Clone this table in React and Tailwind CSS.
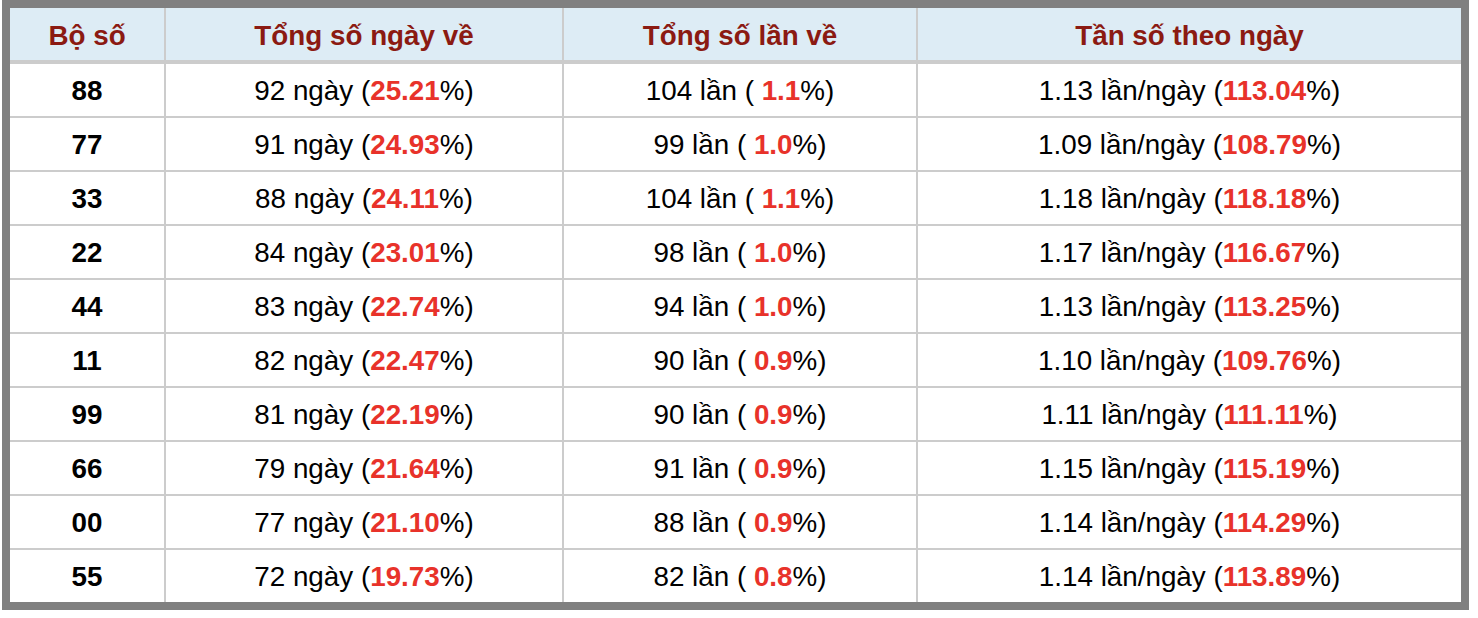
const rows = [
  ["88", "92", "25.21", "104", " 1.1", "1.13", "113.04"],
  ["77", "91", "24.93", "99", " 1.0", "1.09", "108.79"],
  ["33", "88", "24.11", "104", " 1.1", "1.18", "118.18"],
  ["22", "84", "23.01", "98", " 1.0", "1.17", "116.67"],
  ["44", "83", "22.74", "94", " 1.0", "1.13", "113.25"],
  ["11", "82", "22.47", "90", " 0.9", "1.10", "109.76"],
  ["99", "81", "22.19", "90", " 0.9", "1.11", "111.11"],
  ["66", "79", "21.64", "91", " 0.9", "1.15", "115.19"],
  ["00", "77", "21.10", "88", " 0.9", "1.14", "114.29"],
  ["55", "72", "19.73", "82", " 0.8", "1.14", "113.89"],
];

const cols = "grid grid-cols-[154px_396px_352px_543px] gap-x-[2px]";
const cell = "flex items-center justify-center h-[52px] pt-[2px] bg-white whitespace-pre";

function Red({ children }) {
  return <span className="font-bold text-[#e8322a]">{children}</span>;
}

export default function App() {
  return (
    <div
      className="ml-[2px] w-[1467px] border-[8px] border-[#808080] bg-[#cccccc] text-[27.8px] text-black"
      style={{ fontFamily: '"Liberation Sans", Arial, sans-serif' }}
    >
      <div className={cols}>
        {["Bộ số", "Tổng số ngày về", "Tổng số lần về", "Tần số theo ngày"].map((h) => (
          <div key={h} className="flex items-center justify-center h-[52px] pt-[3px] bg-[#ddecf5] font-bold text-[#8b1a12]">
            {h}
          </div>
        ))}
      </div>
      <div className="mt-[4px] flex flex-col gap-y-[2px]">
        {rows.map((r) => (
          <div key={r[0]} className={cols}>
            <div className={cell + " font-bold"}>{r[0]}</div>
            <div className={cell}>
              {r[1]} ngày (<Red>{r[2]}</Red>%)
            </div>
            <div className={cell}>
              {r[3]} lần (<Red>{r[4]}</Red>%)
            </div>
            <div className={cell}>
              {r[5]} lần/ngày (<Red>{r[6]}</Red>%)
            </div>
          </div>
        ))}
      </div>
    </div>
  );
}
